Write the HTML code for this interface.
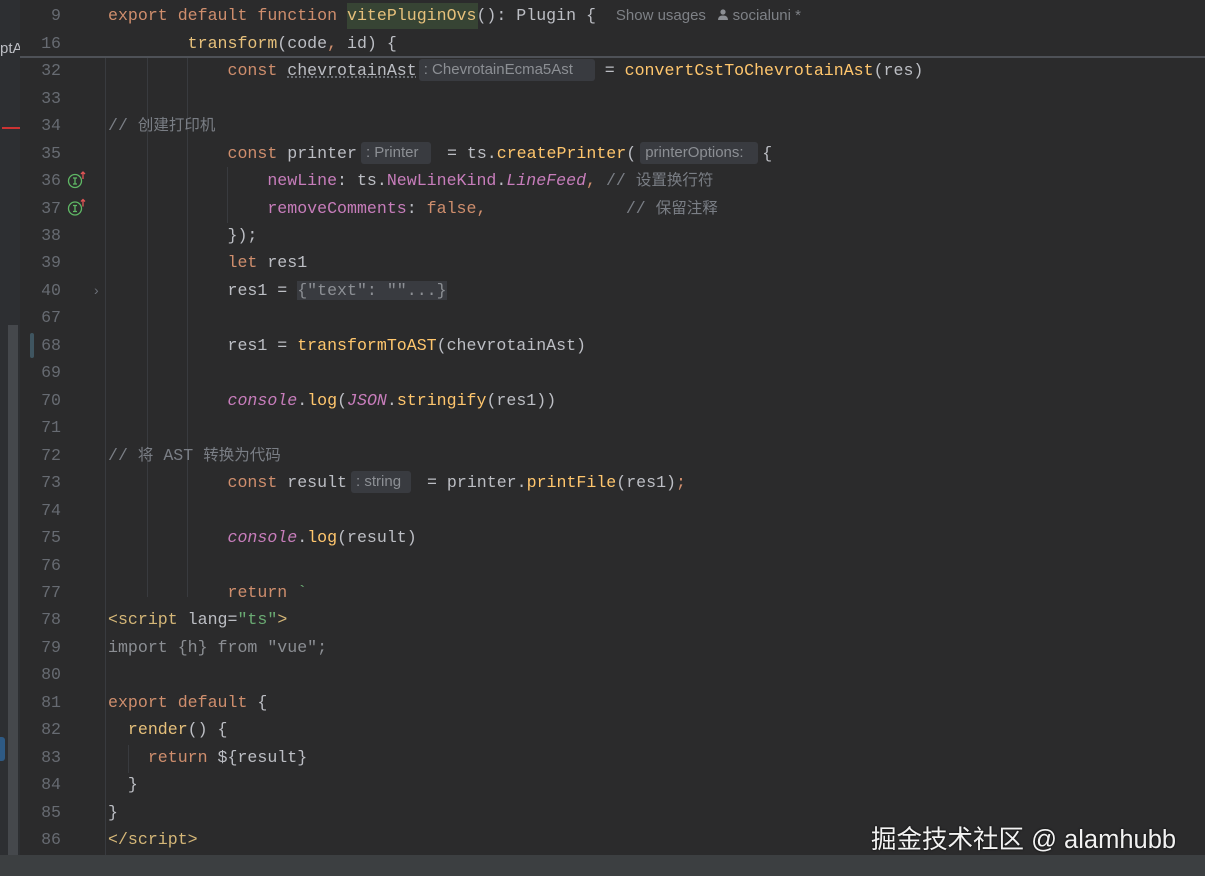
<!DOCTYPE html>
<html><head><meta charset="utf-8"><style>
body{margin:0;width:1205px;height:876px;overflow:hidden;background:#2b2b2c;position:relative;font-family:"Liberation Mono","Noto Sans CJK SC",monospace;}
.left{position:absolute;left:0;top:0;width:20px;height:876px;background:#2d2f32;}
.sb{position:absolute;left:8px;top:325px;width:10px;height:530px;background:#45484c;}
.bottom{position:absolute;left:0;top:855px;width:1205px;height:21px;background:#3c3f41;}
.row{position:absolute;left:20px;width:1185px;height:27.46px;line-height:27.46px;font-size:16.6px;color:#bcbec4;white-space:pre;}
.ln{position:absolute;left:0;width:41px;text-align:right;color:#676b72;}
.code{position:absolute;left:88px;}
.k{color:#cf8e6d}.f{color:#e6c07b}.f2{color:#ffc66d}.c{color:#7a7e85}.p{color:#c77dbb}.s{color:#6aab73}.t{color:#d5b778}.g{color:#8b8e93}.i{font-style:italic}
.h{display:inline-block;box-sizing:border-box;background:#393b40;color:#8c8f94;font-family:"Liberation Sans","Noto Sans CJK SC",sans-serif;font-size:15px;line-height:22px;padding:0 0 0 5px;border-radius:3px;vertical-align:1px;white-space:nowrap;}
.guide{position:absolute;width:1px;background:#393b3f;}
.cn{font-family:"Liberation Sans","Noto Sans CJK SC",sans-serif;font-size:15.5px}
</style></head><body>
<div class="left"><div class="sb"></div>
<div style="position:absolute;left:0;top:40px;color:#bcbec4;font:15px 'Liberation Sans',sans-serif;width:20px;overflow:hidden;white-space:nowrap">ptA</div>
<div style="position:absolute;left:2px;top:127px;width:18px;height:2px;background:#c33"></div>
<div style="position:absolute;left:0;top:737px;width:5px;height:24px;background:#2e5a84;border-radius:0 3px 3px 0"></div>
</div>
<div class="guide" style="left:105px;top:57px;height:798px"></div>
<div class="guide" style="left:147px;top:57px;height:540px"></div>
<div class="guide" style="left:187px;top:57px;height:540px"></div>
<div class="guide" style="left:227px;top:167px;height:56px"></div>
<div class="guide" style="left:128px;top:745px;height:28px"></div>
<div style="position:absolute;left:347px;top:3px;width:131px;height:26px;background:#374434"></div>
<div style="position:absolute;left:20px;top:56px;width:1185px;height:2px;background:#4e5157"></div>
<div style="position:absolute;left:30px;top:333px;width:4px;height:25px;background:#3f5560;border-radius:2px"></div>

<div class="row" style="top:2.3px"><span class="ln">9</span><span class="code"><span class="k">export default function </span><span class="f">vitePluginOvs</span>(): Plugin {  <span style="font-family:'Liberation Sans',sans-serif;font-size:15px;color:#7e8186">Show usages   <svg width="10" height="11" viewBox="0 0 10 11" style="vertical-align:0"><circle cx="5" cy="3" r="2.6" fill="#8c8f94"/><path d="M0 11 Q0 6.5 5 6.5 Q10 6.5 10 11Z" fill="#8c8f94"/></svg> socialuni *</span></span></div>
<div class="row" style="top:29.76px"><span class="ln">16</span><span class="code">        <span class="f">transform</span>(code<span class="k">,</span> id) {</span></div>
<div class="row" style="top:57.2px"><span class="ln">32</span><span class="code">            <span class="k">const</span> <span style="text-decoration:underline dotted #7a7e85">chevrotainAst</span><span class="h" style="width:176px;margin-left:2px;margin-right:10px">: ChevrotainEcma5Ast</span>= <span class="f2">convertCstToChevrotainAst</span>(res)</span></div>
<div class="row" style="top:84.7px"><span class="ln">33</span></div>
<div class="row" style="top:112.1px"><span class="ln">34</span><span class="code c">// <span class="cn">创建打印机</span></span></div>
<div class="row" style="top:139.6px"><span class="ln">35</span><span class="code">            <span class="k">const</span> printer<span class="h" style="width:70px;margin-left:4px;margin-right:16px">: Printer</span>= ts.<span class="f2">createPrinter</span>(<span class="h" style="width:118px;margin-left:4px;margin-right:4px">printerOptions:</span>{</span></div>
<div class="row" style="top:167.1px"><span class="ln">36</span><span class="code">                <span class="p">newLine</span>: ts.<span class="p">NewLineKind</span>.<span class="p i">LineFeed</span><span class="k">,</span> <span class="c">// <span class="cn">设置换行符</span></span></span></div>
<div class="row" style="top:194.5px"><span class="ln">37</span><span class="code">                <span class="p">removeComments</span>: <span class="k">false,</span>              <span class="c">// <span class="cn">保留注释</span></span></span></div>
<div class="row" style="top:222px"><span class="ln">38</span><span class="code">            });</span></div>
<div class="row" style="top:249.4px"><span class="ln">39</span><span class="code">            <span class="k">let</span> res1</span></div>
<div class="row" style="top:276.9px"><span class="ln">40</span><span style="position:absolute;left:74px;color:#6c7078;font-family:'Liberation Sans';font-size:14px">›</span><span class="code">            res1 = <span style="background:#393b40;color:#8c8f94">{"text": ""...}</span></span></div>
<div class="row" style="top:304.4px"><span class="ln">67</span></div>
<div class="row" style="top:331.8px"><span class="ln">68</span><span class="code">            res1 = <span class="f2">transformToAST</span>(chevrotainAst)</span></div>
<div class="row" style="top:359.3px"><span class="ln">69</span></div>
<div class="row" style="top:386.7px"><span class="ln">70</span><span class="code">            <span class="p i">console</span>.<span class="f2">log</span>(<span class="p i">JSON</span>.<span class="f2">stringify</span>(res1))</span></div>
<div class="row" style="top:414.2px"><span class="ln">71</span></div>
<div class="row" style="top:441.7px"><span class="ln">72</span><span class="code c">// <span class="cn">将</span> AST <span class="cn">转换为代码</span></span></div>
<div class="row" style="top:469.1px"><span class="ln">73</span><span class="code">            <span class="k">const</span> result<span class="h" style="width:60px;margin-left:4px;margin-right:16px">: string</span>= printer.<span class="f2">printFile</span>(res1)<span class="k">;</span></span></div>
<div class="row" style="top:496.6px"><span class="ln">74</span></div>
<div class="row" style="top:524px"><span class="ln">75</span><span class="code">            <span class="p i">console</span>.<span class="f2">log</span>(result)</span></div>
<div class="row" style="top:551.5px"><span class="ln">76</span></div>
<div class="row" style="top:579px"><span class="ln">77</span><span class="code">            <span class="k">return</span> <span class="s">`</span></span></div>
<div class="row" style="top:606.4px"><span class="ln">78</span><span class="code"><span class="t">&lt;script</span> lang=<span class="s">"ts"</span><span class="t">&gt;</span></span></div>
<div class="row" style="top:633.9px"><span class="ln">79</span><span class="code g">import {h} from "vue";</span></div>
<div class="row" style="top:661.3px"><span class="ln">80</span></div>
<div class="row" style="top:688.8px"><span class="ln">81</span><span class="code"><span class="k">export default</span> {</span></div>
<div class="row" style="top:716.3px"><span class="ln">82</span><span class="code">  <span class="f">render</span>() {</span></div>
<div class="row" style="top:743.7px"><span class="ln">83</span><span class="code">    <span class="k">return</span> ${result}</span></div>
<div class="row" style="top:771.2px"><span class="ln">84</span><span class="code">  }</span></div>
<div class="row" style="top:798.6px"><span class="ln">85</span><span class="code">}</span></div>
<div class="row" style="top:826.1px"><span class="ln">86</span><span class="code"><span class="t">&lt;/script&gt;</span></span></div>

<svg style="position:absolute;left:67px;top:171px" width="22" height="46" viewBox="0 0 22 46">
<g fill="none" stroke="#5fb865" stroke-width="1.3"><circle cx="8" cy="10" r="6.5"/><circle cx="8" cy="37.5" r="6.5"/></g>
<g stroke="#5fb865" stroke-width="1.3"><path d="M6 7H10M8 7V13M6 13H10"/><path d="M6 34.5H10M8 34.5V40.5M6 40.5H10"/></g>
<g stroke="#e05555" stroke-width="1.3" fill="none"><path d="M16 8V1M14 3L16 1L18 3"/><path d="M16 35.5V28.5M14 30.5L16 28.5L18 30.5"/></g>
</svg>
<div class="bottom"></div>
<div style="position:absolute;left:871px;top:819px;color:#f2f2f2;font:25.5px 'Liberation Sans','Noto Sans CJK SC',sans-serif;text-shadow:0 0 2px #000;white-space:nowrap">掘金技术社区 @ alamhubb</div>
</body></html>
